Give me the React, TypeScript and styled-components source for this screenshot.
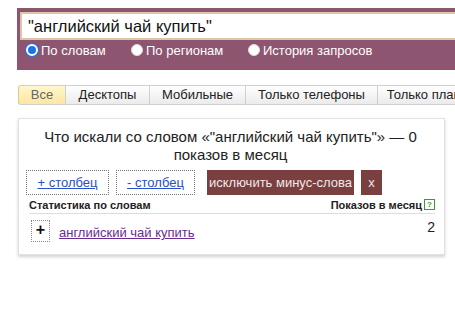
import React from 'react';
import styled, { createGlobalStyle } from 'styled-components';

const GlobalStyle = createGlobalStyle`
  body {
    margin: 0;
    background: #fff;
    font-family: 'Liberation Sans', Arial, sans-serif;
    overflow: hidden;
  }
`;

const Page = styled.div`
  width: 455px;
  height: 310px;
  overflow: hidden;
  padding-top: 8px;
  box-sizing: border-box;
`;

const SearchBand = styled.div`
  margin-left: 17px;
  height: 62px;
  background: #8d5570;
  padding: 4px 0 0 3px;
  box-sizing: border-box;
`;

const SearchInput = styled.div`
  height: 28px;
  box-sizing: border-box;
  background: #fff;
  border: 2px solid #dcc6a8;
  border-right: none;
  font-size: 16.5px;
  line-height: 24px;
  padding-left: 6px;
  color: #111;
  white-space: nowrap;
`;

const RadioRow = styled.div`
  display: flex;
  align-items: center;
  height: 18px;
  margin-top: 1px;
  padding-left: 6px;
`;

const RadioItem = styled.label<{ $width: number }>`
  display: flex;
  align-items: center;
  gap: 3px;
  width: ${({ $width }) => $width}px;
  color: #fff;
  font-size: 13px;
`;

const RadioDot = styled.span<{ $checked?: boolean }>`
  width: 12px;
  height: 12px;
  border-radius: 50%;
  box-sizing: border-box;
  background: ${({ $checked }) => ($checked ? '#1a73e8' : '#fff')};
  border: ${({ $checked }) => ($checked ? '2px solid #fff' : '1px solid #ddd')};
  box-shadow: ${({ $checked }) => ($checked ? '0 0 0 1px #1a73e8' : 'none')};
`;

const Tabs = styled.div`
  display: flex;
  margin: 15px 0 0 18px;
  height: 20px;
  white-space: nowrap;
`;

const Tab = styled.div<{ $active?: boolean; $width: number }>`
  flex: 0 0 ${({ $width }) => $width}px;
  box-sizing: border-box;
  height: 20px;
  line-height: 18px;
  font-size: 13px;
  text-align: center;
  color: ${({ $active }) => ($active ? '#666' : '#222')};
  border: 1px solid #cfcfcf;
  border-left: ${({ $active }) => ($active ? '1px solid #d8c98c' : 'none')};
  border-radius: ${({ $active }) => ($active ? '3px 0 0 3px' : '0')};
  background: ${({ $active }) =>
    $active
      ? 'linear-gradient(#fff6cc, #fbe7a2)'
      : 'linear-gradient(#ffffff, #ebebeb)'};
`;

const Card = styled.div`
  margin: 13px 0 0 18px;
  width: 427px;
  height: 137px;
  box-sizing: border-box;
  border: 1px solid #e2e2e2;
  box-shadow: 0 2px 3px rgba(0, 0, 0, 0.18);
  padding: 9px 9px 0 7px;
`;

const Title = styled.div`
  text-align: center;
  font-size: 15px;
  line-height: 18px;
  color: #222;
  padding: 0 10px;
`;

const ActionRow = styled.div`
  display: flex;
  align-items: center;
  gap: 7px;
  margin-top: 6px;
  height: 25px;
`;

const DottedButton = styled.div<{ $width: number }>`
  width: ${({ $width }) => $width}px;
  height: 25px;
  box-sizing: border-box;
  border: 1px dotted #777;
  display: flex;
  align-items: center;
  justify-content: center;
  font-size: 13px;
  color: #2a4fc4;
  text-decoration: underline;
`;

const BrownButton = styled.div<{ $width: number; $gap?: number }>`
  width: ${({ $width }) => $width}px;
  margin-left: ${({ $gap }) => $gap || 0}px;
  height: 25px;
  background: #7a3f3f;
  color: #f2e8e8;
  font-size: 13px;
  display: flex;
  align-items: center;
  justify-content: center;
`;

const TableHead = styled.div`
  display: flex;
  justify-content: space-between;
  align-items: center;
  margin: 1px 0 0 3px;
  height: 17px;
  border-bottom: 1px solid #ddd;
  font-size: 11px;
  font-weight: bold;
  color: #222;
`;

const HeadRight = styled.span`
  display: flex;
  align-items: center;
  gap: 2px;
`;

const HelpIcon = styled.span`
  width: 9px;
  height: 9px;
  border: 1px solid #3a9a3a;
  color: #3a9a3a;
  font-size: 8px;
  line-height: 9px;
  text-align: center;
  font-weight: bold;
`;

const TableRow = styled.div`
  display: flex;
  align-items: flex-start;
  margin: 6px 0 0 5px;
`;

const PlusBox = styled.div`
  width: 19px;
  height: 22px;
  box-sizing: border-box;
  border: 1px dotted #888;
  font-size: 16px;
  font-weight: bold;
  line-height: 18px;
  text-align: center;
  color: #111;
`;

const WordLink = styled.a`
  margin: 5px 0 0 9px;
  font-size: 13px;
  color: #6a2c91;
  text-decoration: underline;
  flex: 1;
`;

const Count = styled.span`
  font-size: 14px;
  color: #222;
  margin-top: -1px;
`;

export default function App() {
  return (
    <Page>
      <GlobalStyle />
      <SearchBand>
        <SearchInput>"английский чай купить"</SearchInput>
        <RadioRow>
          <RadioItem $width={105}>
            <RadioDot $checked />
            По словам
          </RadioItem>
          <RadioItem $width={117}>
            <RadioDot />
            По регионам
          </RadioItem>
          <RadioItem $width={130}>
            <RadioDot />
            История запросов
          </RadioItem>
        </RadioRow>
      </SearchBand>
      <Tabs>
        <Tab $active $width={48}>Все</Tab>
        <Tab $width={84}>Десктопы</Tab>
        <Tab $width={96}>Мобильные</Tab>
        <Tab $width={132}>Только телефоны</Tab>
        <Tab $width={125}>Только планшеты</Tab>
      </Tabs>
      <Card>
        <Title>Что искали со словом «"английский чай купить"» — 0 показов в месяц</Title>
        <ActionRow>
          <DottedButton $width={83}>+ столбец</DottedButton>
          <DottedButton $width={79}>- столбец</DottedButton>
          <BrownButton $width={147} $gap={5}>исключить минус-слова</BrownButton>
          <BrownButton $width={21}>x</BrownButton>
        </ActionRow>
        <TableHead>
          <span>Статистика по словам</span>
          <HeadRight>
            Показов в месяц
            <HelpIcon>?</HelpIcon>
          </HeadRight>
        </TableHead>
        <TableRow>
          <PlusBox>+</PlusBox>
          <WordLink href="#">английский чай купить</WordLink>
          <Count>2</Count>
        </TableRow>
      </Card>
    </Page>
  );
}
